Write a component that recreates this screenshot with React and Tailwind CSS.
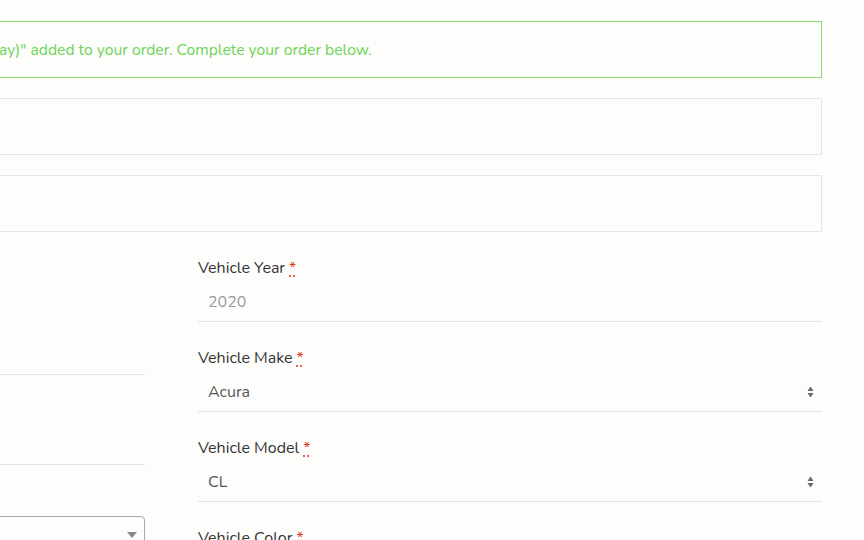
import React from "react";

function Req() {
  return (
    <abbr
      title="required"
      className="ml-[4px] text-[#e2401c] underline decoration-dotted underline-offset-[3px]"
    >
      *
    </abbr>
  );
}

function Field({ label, children }) {
  return (
    <div className="mb-6">
      <div className="h-6 leading-6 mb-px text-[#333] whitespace-nowrap">
        {label}
        <Req />
      </div>
      {children}
    </div>
  );
}

function LineInput({ value, muted }) {
  return (
    <div
      className={
        "h-[41px] border-b border-[#e4e3ec] px-[10px] pt-[2px] flex items-center " +
        (muted ? "text-[#9a9a9a]" : "text-[#555]")
      }
    >
      {value}
    </div>
  );
}

function SelectArrows() {
  return (
    <svg width="7" height="12" viewBox="0 0 7 12" className="text-[#666]">
      <path d="M3.5 0.5 L6.5 5 L0.5 5 Z" fill="currentColor" />
      <path d="M3.5 11.5 L6.5 7 L0.5 7 Z" fill="currentColor" />
    </svg>
  );
}

function LineSelect({ value }) {
  return (
    <div className="h-[41px] border-b border-[#e4e3ec] pl-[10px] pr-[8px] pt-[2px] flex items-center justify-between text-[#555]">
      <span>{value}</span>
      <SelectArrows />
    </div>
  );
}

export default function App() {
  return (
    <div className="h-[540px] w-full overflow-hidden bg-[#fdfdfb] font-['Nunito','Lato','Liberation_Sans',sans-serif] text-base">
      <div className="ml-[-477px] w-[1299px] pt-[21px]">
        {/* notices */}
        <div className="h-[57px] shadow-[inset_0_0_0_1px_#86e06f] flex items-center pl-[476px] pt-[2px] text-[#6dd457]">
          <span className="text-[15.7px]">
            ay)" added to your order. Complete your order below.
          </span>
        </div>
        <div className="mt-5 h-[57px] border border-[#e6e6ee]" />
        <div className="mt-5 h-[57px] border border-[#e6e6e6]" />

        {/* billing / vehicle columns */}
        <div className="mt-6 grid grid-cols-[622px_624px] gap-x-[53px]">
          <div className="pt-[53px]">
            <Field label="Phone">
              <LineInput value="" />
            </Field>
            <Field label="Email address">
              <LineInput value="" />
            </Field>
            <div className="h-6 leading-6 mb-[3px] text-[#333]">
              Country / Region
              <Req />
            </div>
            <div className="h-[38px] border border-[#aaa] rounded-[4px] flex items-center justify-end pr-[7px]">
              <svg width="10" height="6" viewBox="0 0 10 6">
                <path d="M0 0 L10 0 L5 6 Z" fill="#888" />
              </svg>
            </div>
          </div>

          <div>
            <Field label="Vehicle Year">
              <LineInput value="2020" muted />
            </Field>
            <Field label="Vehicle Make">
              <LineSelect value="Acura" />
            </Field>
            <Field label="Vehicle Model">
              <LineSelect value="CL" />
            </Field>
            <Field label="Vehicle Color">
              <LineInput value="" />
            </Field>
          </div>
        </div>
      </div>
    </div>
  );
}
